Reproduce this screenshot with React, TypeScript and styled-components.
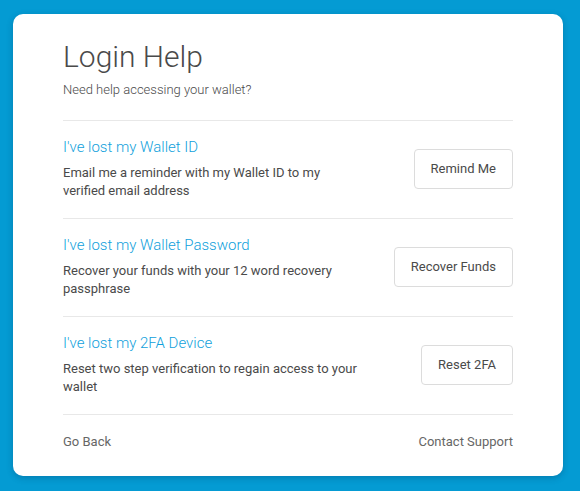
import styled, { createGlobalStyle } from "styled-components";

const GlobalStyle = createGlobalStyle`
  html, body {
    margin: 0;
    padding: 0;
    background: #049bd3;
    font-family: Roboto, "Liberation Sans", sans-serif;
    -webkit-font-smoothing: antialiased;
  }
`;

const Page = styled.div`
  width: 580px;
  height: 491px;
  padding: 14px 0 0 13px;
  box-sizing: border-box;
`;

const Card = styled.div`
  width: 550px;
  height: 462px;
  box-sizing: border-box;
  background: #fff;
  border-radius: 10px;
  box-shadow: 0 2px 6px rgba(0, 40, 80, 0.25);
  padding: 25px 50px 0;
  display: flex;
  flex-direction: column;
`;

const Header = styled.header`
  padding-bottom: 21px;
  border-bottom: 1px solid #e8e8e8;
`;

const Title = styled.h1`
  margin: 0;
  font-size: 30px;
  line-height: 36px;
  font-weight: 300;
  color: #4a4a4a;
`;

const Subtitle = styled.p`
  margin: 6px 0 0;
  font-size: 13px;
  line-height: 18px;
  font-weight: 300;
  color: #4a4a4a;
`;

const Row = styled.section`
  display: flex;
  align-items: center;
  justify-content: space-between;
  padding: 16px 0 18px;
  border-bottom: 1px solid #e8e8e8;
`;

const Info = styled.div`
  width: 300px;
`;

const Heading = styled.h2`
  margin: 0 0 7px;
  font-size: 15px;
  line-height: 20px;
  font-weight: 300;
  color: #109fdc;
`;

const Desc = styled.p`
  margin: 0;
  font-size: 13px;
  line-height: 18px;
  font-weight: 400;
  color: #4a4a4a;
`;

const Button = styled.button`
  height: 40px;
  padding: 0 16px;
  background: #fff;
  border: 1px solid #dcdcdc;
  border-radius: 4px;
  font-family: inherit;
  font-size: 13px;
  font-weight: 400;
  color: #4a4a4a;
  cursor: pointer;
`;

const Footer = styled.footer`
  display: flex;
  justify-content: space-between;
  padding-top: 18px;
`;

const FooterLink = styled.a`
  font-size: 13px;
  line-height: 18px;
  color: #666;
  text-decoration: none;
  cursor: pointer;
`;

const options = [
  {
    title: "I've lost my Wallet ID",
    desc: "Email me a reminder with my Wallet ID to my verified email address",
    action: "Remind Me",
  },
  {
    title: "I've lost my Wallet Password",
    desc: "Recover your funds with your 12 word recovery passphrase",
    action: "Recover Funds",
  },
  {
    title: "I've lost my 2FA Device",
    desc: "Reset two step verification to regain access to your wallet",
    action: "Reset 2FA",
  },
];

export default function App() {
  return (
    <>
      <GlobalStyle />
      <Page>
        <Card>
          <Header>
            <Title>Login Help</Title>
            <Subtitle>Need help accessing your wallet?</Subtitle>
          </Header>
          {options.map((o) => (
            <Row key={o.action}>
              <Info>
                <Heading>{o.title}</Heading>
                <Desc>{o.desc}</Desc>
              </Info>
              <Button>{o.action}</Button>
            </Row>
          ))}
          <Footer>
            <FooterLink>Go Back</FooterLink>
            <FooterLink>Contact Support</FooterLink>
          </Footer>
        </Card>
      </Page>
    </>
  );
}
